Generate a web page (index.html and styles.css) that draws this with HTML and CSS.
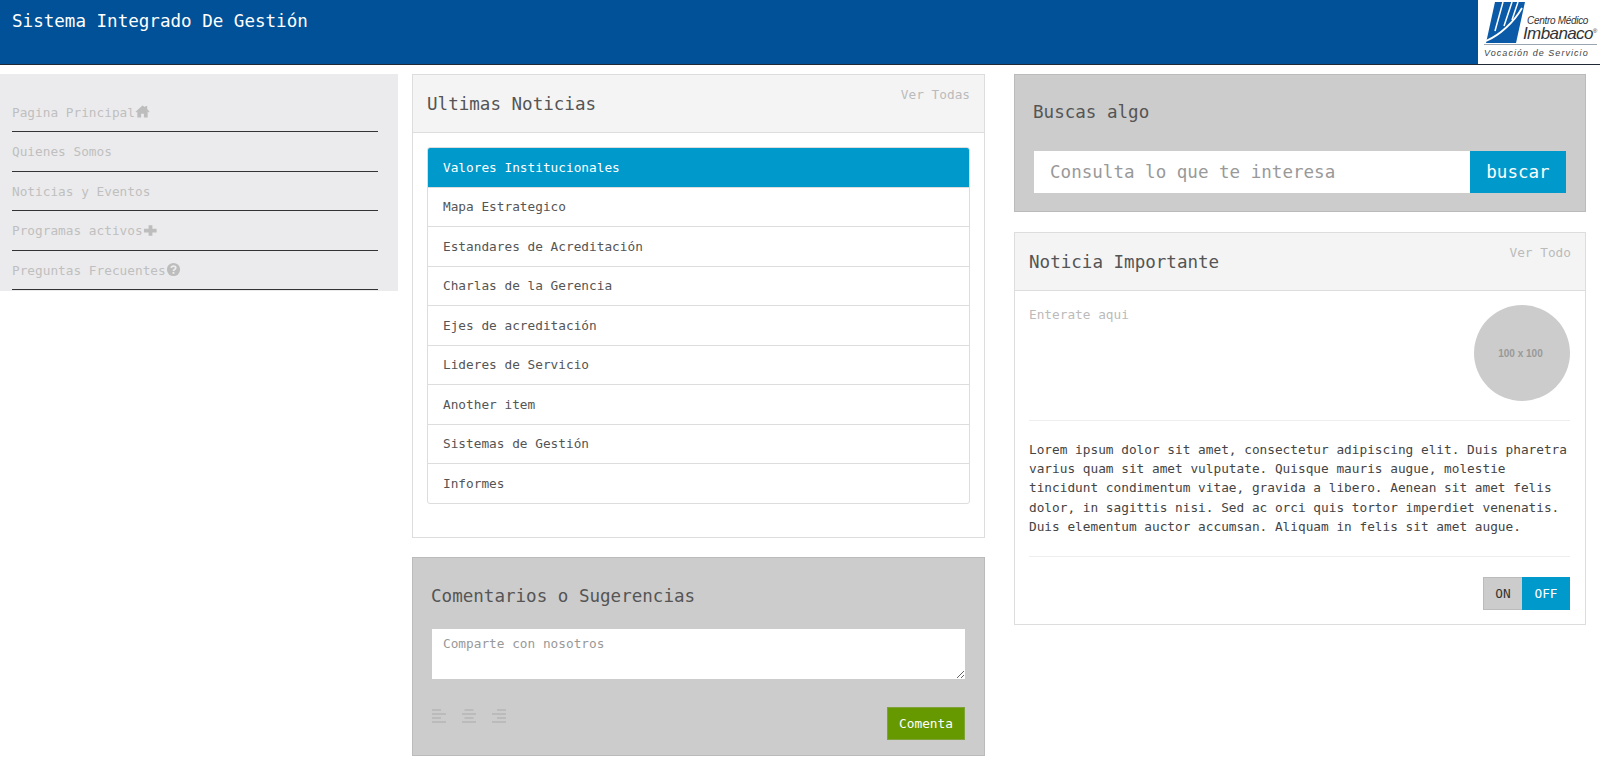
FILE: index.html
```html
<!DOCTYPE html>
<html lang="es">
<head>
<meta charset="utf-8">
<title>Sistema Integrado De Gestión</title>
<link rel="stylesheet" href="styles.css">
</head>
<body>
<header class="topbar">
  <h1 class="brand">Sistema Integrado De Gestión</h1>
  <div class="logo">
    <div class="logo-main">
      <svg class="logo-mark" viewBox="0 0 39 41" width="39" height="41">
        <path fill="#0b5aa8" d="M9 0h30l-9 41H0z"/>
        <path fill="none" stroke="#fff" stroke-width="1.500" d="M17 0 9 29M26 0 18 24M32 0 26 18"/>
        <path fill="none" stroke="#fff" stroke-width="1.800" d="M0 39C14 33 28 20 36 6"/>
      </svg>
      <div class="logo-name">
        <span class="logo-small">Centro Médico</span>
        <span class="logo-big">Imbanaco<sup class="logo-reg">®</sup></span>
      </div>
    </div>
    <div class="logo-tag">Vocación de Servicio</div>
  </div>
</header>
<main class="page">
  <nav class="sidebar">
    <a class="nav-item">Pagina Principal<svg class="ico" viewBox="0 0 16 16"><path d="M8 1.500 0.500 8.200l.8.900L2.500 8v6.500h4v-4h3v4h4V8l1.200 1.100.8-.9L13 5.300V2h-2v1.500z"/></svg></a>
    <a class="nav-item">Quienes Somos</a>
    <a class="nav-item">Noticias y Eventos</a>
    <a class="nav-item">Programas activos<svg class="ico" viewBox="0 0 16 16"><path d="M6 2.500h4V6h4.500v4H10v3.500H6V10H1V6h5z"/></svg></a>
    <a class="nav-item">Preguntas Frecuentes<svg class="ico" viewBox="0 0 16 16"><circle cx="8" cy="8" r="7"/><path fill="none" stroke="#ebebed" stroke-width="1.900" d="M5.600 6.300C5.700 4.900 6.700 4.300 8 4.300c1.400 0 2.400.8 2.400 1.900 0 1.800-2.400 1.600-2.400 3.300"/><rect x="7" y="10.600" width="2" height="2" fill="#ebebed"/></svg></a>
  </nav>

  <div class="col">
    <section class="panel news">
      <div class="panel-head">
        <h2 class="panel-title">Ultimas Noticias</h2>
        <a class="panel-link">Ver Todas</a>
      </div>
      <div class="panel-body">
        <ul class="list">
          <li class="list-item active">Valores Institucionales</li>
          <li class="list-item">Mapa Estrategico</li>
          <li class="list-item">Estandares de Acreditación</li>
          <li class="list-item">Charlas de la Gerencia</li>
          <li class="list-item">Ejes de acreditación</li>
          <li class="list-item">Lideres de Servicio</li>
          <li class="list-item">Another item</li>
          <li class="list-item">Sistemas de Gestión</li>
          <li class="list-item">Informes</li>
        </ul>
      </div>
    </section>
    <section class="well comments">
      <h2 class="well-title comments-title">Comentarios o Sugerencias</h2>
      <textarea class="comment-box" placeholder="Comparte con nosotros"></textarea>
      <div class="comment-foot">
        <div class="align-icons">
          <svg class="align" viewBox="0 0 14 14"><path d="M0 0h9v2H0zM0 4h14v2H0zM0 8h9v2H0zM0 12h14v2H0z"/></svg>
          <svg class="align" viewBox="0 0 14 14"><path d="M2.500 0h9v2h-9zM0 4h14v2H0zM2.500 8h9v2h-9zM0 12h14v2H0z"/></svg>
          <svg class="align" viewBox="0 0 14 14"><path d="M5 0h9v2H5zM0 4h14v2H0zM5 8h9v2H5zM0 12h14v2H0z"/></svg>
        </div>
        <button class="btn-green">Comenta</button>
      </div>
    </section>
  </div>

  <div class="col col-right">
    <section class="well search">
      <h2 class="well-title search-title">Buscas algo</h2>
      <div class="search-row">
        <input class="search-input" placeholder="Consulta lo que te interesa">
        <button class="search-btn">buscar</button>
      </div>
    </section>
    <section class="panel important">
      <div class="panel-head">
        <h2 class="panel-title">Noticia Importante</h2>
        <a class="panel-link">Ver Todo</a>
      </div>
      <div class="panel-body">
        <div class="media">
          <span class="media-label">Enterate aqui</span>
          <div class="avatar">100 x 100</div>
        </div>
        <p class="lorem">Lorem ipsum dolor sit amet, consectetur adipiscing elit. Duis pharetra varius quam sit amet vulputate. Quisque mauris augue, molestie tincidunt condimentum vitae, gravida a libero. Aenean sit amet felis dolor, in sagittis nisi. Sed ac orci quis tortor imperdiet venenatis. Duis elementum auctor accumsan. Aliquam in felis sit amet augue.</p>
        <div class="toggle-row">
          <div class="toggle">
            <span class="toggle-on">ON</span>
            <span class="toggle-off">OFF</span>
          </div>
        </div>
      </div>
    </section>
  </div>
</main>
</body>
</html>
```
FILE: styles.css
```css
* { box-sizing: border-box; }
html, body { margin: 0; padding: 0; }
body {
  background: #fff;
  color: #555;
  font-family: "DejaVu Sans Mono", "Liberation Mono", monospace;
  font-size: 12.770px;
  height: 770px;
  overflow: hidden;
}
h1, h2, p, ul { margin: 0; padding: 0; }

.topbar {
  display: flex;
  justify-content: space-between;
  height: 65px;
  background: #005197;
  border-bottom: 1px solid #1f2a36;
}
.brand {
  color: #fff;
  font-size: 17.560px;
  font-weight: 400;
  padding: 11px 0 0 12px;
  line-height: 21px;
}
.logo {
  width: 122px;
  background: #fff;
  padding: 2px 3px 0 6px;
}
.logo-main { display: flex; height: 43px; border-bottom: 1px solid #9aa5b0; }
.logo-mark { margin-left: 2px; flex: none; }
.logo-name {
  display: flex;
  flex-direction: column;
  font-family: "Liberation Sans", sans-serif;
  font-style: italic;
  color: #333;
  padding: 13px 0 0 0;
  margin-left: -2px;
  white-space: nowrap;
}
.logo-small { font-size: 10px; line-height: 11px; padding-left: 4px; letter-spacing: -.3px; }
.logo-big { font-size: 17px; line-height: 16px; letter-spacing: -.6px; }
.logo-reg { font-size: 6px; line-height: 0; vertical-align: 6px; }
.logo-tag {
  font-family: "Liberation Sans", sans-serif;
  font-style: italic;
  font-size: 9px;
  letter-spacing: 1.050px;
  color: #444;
  line-height: 12px;
  padding-top: 2px;
  white-space: nowrap;
}

.page {
  display: flex;
  align-items: flex-start;
  padding-top: 9px;
}
.sidebar {
  width: 398px;
  height: 217px;
  background: #ebebed;
  padding: 18.500px 20px 0 12px;
  flex: none;
}
.nav-item {
  display: flex;
  align-items: center;
  height: 39.500px;
  padding-top: 1px;
  border-bottom: 1px solid #333;
  color: #bfbfbf;
  white-space: nowrap;
}
.ico { width: 15px; height: 15px; fill: #bdbdbd; flex: none; margin-top: -1px; }

.col {
  width: 573px;
  margin-left: 14px;
  display: flex;
  flex-direction: column;
  gap: 19px;
  flex: none;
}
.col-right { width: 572px; margin-left: 29px; gap: 20px; }

.panel { border: 1px solid #ddd; background: #fff; }
.panel-head {
  height: 58px;
  background: #f4f4f4;
  border-bottom: 1px solid #ddd;
  display: flex;
  justify-content: space-between;
  padding: 0 14px;
}
.panel-title {
  font-size: 17.560px;
  font-weight: 400;
  line-height: 21px;
  padding-top: 19px;
  color: #555;
}
.panel-link { color: #bbb; line-height: 16px; padding-top: 12px; }
.panel-body { padding: 14px 15px 14px 14px; }

.news { height: 464px; }
.news .panel-body { padding: 14px; }
.list { list-style: none; border: 1px solid #ddd; border-radius: 3px; overflow: hidden; }
.list-item {
  display: flex;
  align-items: center;
  height: 39.500px;
  padding-left: 15px;
  border-top: 1px solid #ddd;
  color: #555;
}
.list-item:first-child { border-top: 0; }
.active { background: #0099cc; color: #fff; margin: -1px -1px 0; padding: 1px 0 0 16px; height: 39.500px; }

.well { background: #ccc; border: 1px solid #bbb; }
.well-title { font-size: 17.560px; font-weight: 400; line-height: 21px; color: #555; }

.comments { height: 199px; padding: 28px 19px 0; }
.comments-title { margin-left: -1px; }
.comment-box {
  display: block;
  width: 100%;
  height: 50px;
  margin-top: 22px;
  border: 0;
  background: #fff;
  padding: 7px 11px;
  font: inherit;
  outline: 0;
}
.comment-box::placeholder { color: #999; opacity: 1; }
.comment-foot { display: flex; justify-content: space-between; align-items: flex-start; margin-top: 28px; }
.align-icons { display: flex; gap: 16px; padding-top: 2px; }
.align { width: 14px; height: 14px; fill: #bbb; }
.btn-green {
  width: 78px;
  height: 33px;
  background: #669900;
  color: #fff;
  border: 1px solid #7fa33a;
  font: inherit;
  padding: 0;
}

.search { height: 138px; padding: 27px 19px 0; }
.search-title { margin-left: -1px; }
.search-row { display: flex; margin-top: 28px; }
.search-input {
  flex: 1;
  min-width: 0;
  height: 42px;
  border: 0;
  background: #fff;
  padding: 0 16px;
  font: inherit;
  font-size: 17.560px;
  outline: 0;
}
.search-input::placeholder { color: #999; opacity: 1; }
.search-btn {
  width: 96px;
  height: 42px;
  border: 0;
  background: #0099cc;
  color: #fff;
  font: inherit;
  font-size: 17.560px;
  padding: 0;
}

.important { height: 393px; }
.media {
  display: flex;
  justify-content: space-between;
  height: 116px;
  border-bottom: 1px solid #eee;
}
.media-label { color: #bbb; line-height: 20px; }
.avatar {
  width: 96px;
  height: 96px;
  border-radius: 50%;
  background: #ccc;
  color: #999;
  font-family: "Liberation Sans", sans-serif;
  font-size: 10px;
  font-weight: 700;
  padding-right: 3px;
  display: flex;
  align-items: center;
  justify-content: center;
}
.lorem {
  color: #444;
  line-height: 19.200px;
  padding: 19px 0 19px;
  height: 136px;
  border-bottom: 1px solid #eee;
}
.toggle-row { display: flex; justify-content: flex-end; padding-top: 20px; }
.toggle { display: flex; height: 33px; line-height: 33px; text-align: center; }
.toggle-on { width: 39px; background: #ccc; border: 1px solid #bbb; border-right: 0; color: #333; line-height: 31px; }
.toggle-off { width: 48px; background: #0099cc; color: #fff; }
```
